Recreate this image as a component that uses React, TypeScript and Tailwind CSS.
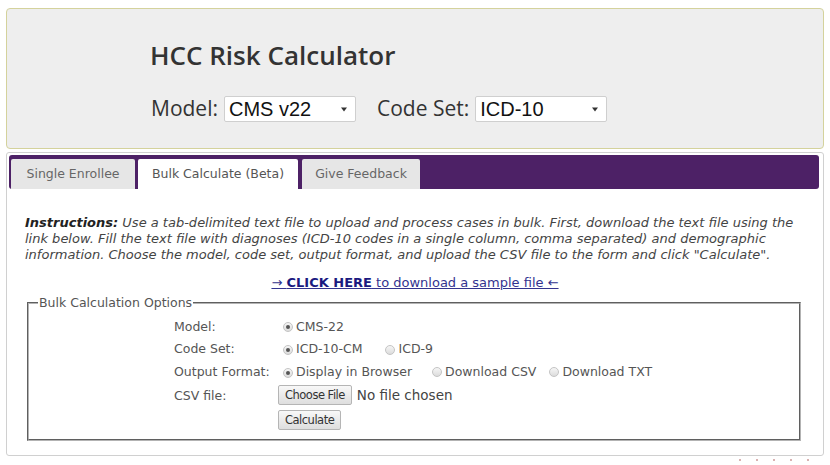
import React from "react";

const body = "font-['DejaVu_Sans',Verdana,sans-serif]";

function FakeSelect({ value, width }: { value: string; width: string }) {
  return (
    <div
      className={`${width} h-[26px] flex items-center justify-between bg-white border border-[#cfcfcf] rounded-[2px] pl-[4px] pr-[8px] font-['Liberation_Sans',Arial,sans-serif] text-[20px] text-[#111]`}
    >
      <span className="leading-none">{value}</span>
      <svg width="6" height="5" viewBox="0 0 6 5">
        <path d="M0 0.5 L6 0.5 L3 4.5 Z" fill="#333" />
      </svg>
    </div>
  );
}

function Radio({ checked }: { checked?: boolean }) {
  return (
    <span className="inline-flex w-[10px] h-[10px] rounded-full border border-[#c4c4c4] bg-gradient-to-b from-[#f6f6f6] to-[#dcdcdc] items-center justify-center mr-[3px] shrink-0">
      {checked && <span className="w-[4px] h-[4px] rounded-full bg-[#555]" />}
    </span>
  );
}

function Choice({ label, checked }: { label: string; checked?: boolean }) {
  return (
    <span className="inline-flex items-center">
      <Radio checked={checked} />
      {label}
    </span>
  );
}

function Btn({ children }: { children: React.ReactNode }) {
  return (
    <span className="inline-flex items-center h-[20px] px-[6px] border border-[#b5b5b5] rounded-[2px] bg-gradient-to-b from-[#f8f8f8] to-[#dedede] text-[#333] text-[11.5px] tracking-[-0.5px]">
      {children}
    </span>
  );
}

export default function App() {
  const tabs = [
    { label: "Single Enrollee", w: "w-[124px]", active: false, ml: "" },
    { label: "Bulk Calculate (Beta)", w: "w-[160px]", active: true, ml: "ml-[3px]" },
    { label: "Give Feedback", w: "w-[118px]", active: false, ml: "ml-[4px]" },
  ];

  return (
    <div className="w-[830px] h-[465px] bg-white overflow-hidden relative">
      {/* Header */}
      <div className="mx-[6px] mt-[8px] h-[141px] border border-[#d4d29c] rounded-[4px] bg-[#eeeeee] pl-[143px] pt-[31px] font-['Open_Sans',sans-serif] text-[#333]">
        <h1 className="text-[26px] leading-[30px] font-semibold">HCC Risk Calculator</h1>
        <div className="mt-[26px] flex items-center h-[26px] text-[21px] pl-[1px]">
          <span className="mr-[6px]">Model:</span>
          <FakeSelect value="CMS v22" width="w-[132px]" />
          <span className="ml-[21px] mr-[6px]">Code Set:</span>
          <FakeSelect value="ICD-10" width="w-[132px]" />
        </div>
      </div>

      {/* Tabs panel */}
      <div className={`mx-[6px] mt-[3px] h-[304px] border border-[#d0d0d0] rounded-[3px] p-[2px] ${body} text-[12.5px] text-[#444]`}>
        <div className="h-[34px] bg-[#4d2166] rounded-[3px] pl-[2px] mr-[2px] flex items-end">
          {tabs.map((t) => (
            <div
              key={t.label}
              className={`${t.w} ${t.ml} h-[30px] flex items-center justify-center rounded-t-[2px] ${
                t.active ? "bg-white text-[#555]" : "bg-[#e6e6e6] text-[#666]"
              }`}
            >
              {t.label}
            </div>
          ))}
        </div>

        <div className="px-[16px] pt-[26px]">
          <p className="italic text-[13px] leading-[16px] text-[#444]">
            <b className="text-[#222]">Instructions:</b> Use a tab-delimited text file to upload and process cases in
            bulk. First, download the text file using the link below. Fill the text file with diagnoses (ICD-10 codes in
            a single column, comma separated) and demographic information. Choose the model, code set, output format,
            and upload the CSV file to the form and click "Calculate".
          </p>

          <div className="mt-[12px] text-center text-[13px] leading-[16px]">
            <a className="text-[#33338f] underline">
              → <b className="text-[#1a1a80]">CLICK HERE</b> to download a sample file ←
            </a>
          </div>

          <fieldset className="mt-[3px] ml-[2px] mr-[4px] border-2 border-[#b3b3b3] [border-style:groove] px-[12px] pb-[6px]">
            <legend className="px-[1px] text-[#555] ml-[-3px]">Bulk Calculation Options</legend>
            <div className="ml-[133px] grid grid-cols-[106px_auto] text-[#555] leading-[22.5px] mt-[3px]">
              <span>Model:</span>
              <span className="flex items-center pl-[3px]">
                <Choice label="CMS-22" checked />
              </span>
              <span>Code Set:</span>
              <span className="flex items-center gap-[23px] pl-[3px]">
                <Choice label="ICD-10-CM" checked />
                <Choice label="ICD-9" />
              </span>
              <span>Output Format:</span>
              <span className="flex items-center pl-[3px]">
                <Choice label="Display in Browser" checked />
                <span className="ml-[20px]">
                  <Choice label="Download CSV" />
                </span>
                <span className="ml-[13px]">
                  <Choice label="Download TXT" />
                </span>
              </span>
              <span>CSV file:</span>
              <span className="flex items-center gap-[5px] h-[21px] ml-[-2px]">
                <Btn>Choose File</Btn>
                <span className="text-[#444] text-[13.5px]">No file chosen</span>
              </span>
              <span />
              <span className="flex items-center h-[26px] ml-[-2px]">
                <Btn>Calculate</Btn>
              </span>
            </div>
          </fieldset>
        </div>
      </div>

      {/* corner dots */}
      <div className="flex gap-[15px] justify-end pr-[21px] mt-[3px]">
        {[0, 1, 2, 3, 4].map((i) => (
          <span key={i} className="w-[2px] h-[2px] rounded-full bg-[#c99]" />
        ))}
      </div>
    </div>
  );
}
